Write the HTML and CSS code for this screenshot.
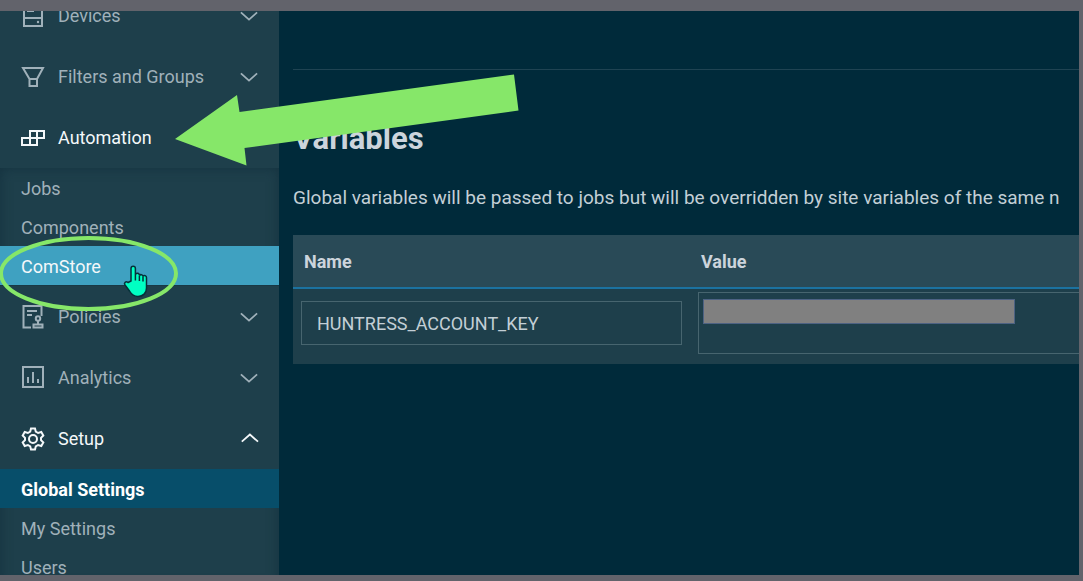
FILE: index.html
```html
<!DOCTYPE html>
<html lang="en">
<head>
    <meta charset="UTF-8">
    <meta name="viewport" content="width=device-width, initial-scale=1.0">
    <title>Global Settings</title>
    <link rel="stylesheet" href="styles.css">
</head>
<body>
    <div class="app">
        <nav class="sidebar">
            <div class="menu">
                <button class="menu-item" type="button">
                    <svg class="icon" viewBox="0 0 24 24"><path d="M3 2h18v20H3zM3 14h18M6 7h7"/><circle class="dot" cx="17" cy="18" r="1.200"/></svg>
                    <span>Devices</span>
                    <svg class="chevron" viewBox="0 0 20 12"><path d="M1 2l9 8 9-8"/></svg>
                </button>
                <button class="menu-item" type="button">
                    <svg class="icon" viewBox="0 0 24 24"><path d="M2 3h20l-6 11v7H8.500v-7zM8.500 14h7.500"/></svg>
                    <span>Filters and Groups</span>
                    <svg class="chevron" viewBox="0 0 20 12"><path d="M1 2l9 8 9-8"/></svg>
                </button>
                <button class="menu-item open" type="button">
                    <svg class="icon" viewBox="0 0 24 24"><path d="M9 5h14v7H9zM1 12h15v7H1zM9 12v7M16 5v7"/></svg>
                    <span>Automation</span>
                </button>
                <div class="submenu">
                    <a href="#">Jobs</a>
                    <a href="#">Components</a>
                    <a href="#" class="hovered">ComStore</a>
                </div>
                <button class="menu-item" type="button">
                    <svg class="icon" viewBox="0 0 24 24"><path d="M10 22.500H2.500V1h18v10M6 6h10M6 10h5"/><circle cx="17" cy="13.500" r="2.200"/><path d="M17 16v3M12.500 19.500h9v3h-9z"/></svg>
                    <span>Policies</span>
                    <svg class="chevron" viewBox="0 0 20 12"><path d="M1 2l9 8 9-8"/></svg>
                </button>
                <button class="menu-item" type="button">
                    <svg class="icon" viewBox="0 0 24 24"><path d="M2 1h20v20H2zM7 11v6M12 6v11M17 13v4"/></svg>
                    <span>Analytics</span>
                    <svg class="chevron" viewBox="0 0 20 12"><path d="M1 2l9 8 9-8"/></svg>
                </button>
                <button class="menu-item open" type="button">
                    <svg class="icon" viewBox="0 0 24 24"><path d="M10 1.500h4l.8 3.200 2.300 1.300 3.200-1 2 3.500-2.300 2.300v2.400l2.300 2.300-2 3.500-3.200-1-2.300 1.300-.8 3.200h-4l-.8-3.200L6.900 18l-3.200 1-2-3.500L4 13.200v-2.400L1.700 8.500l2-3.500 3.200 1 2.300-1.300z"/><circle cx="12" cy="12" r="4"/></svg>
                    <span>Setup</span>
                    <svg class="chevron" viewBox="0 0 20 12"><path d="M2 9l9-8 9 8"/></svg>
                </button>
                <div class="submenu">
                    <a href="#" class="current">Global Settings</a>
                    <a href="#">My Settings</a>
                    <a href="#">Users</a>
                </div>
            </div>
        </nav>
        <main class="content">
            <hr class="divider">
            <h2>Variables</h2>
            <p class="intro">Global variables will be passed to jobs but will be overridden by site variables of the same n</p>
            <table class="variables">
                <thead>
                    <tr>
                        <th class="name-col">Name</th>
                        <th>Value</th>
                    </tr>
                </thead>
                <tbody>
                    <tr>
                        <td><input type="text" value="HUNTRESS_ACCOUNT_KEY" aria-label="Name"></td>
                        <td class="value-cell">
                            <textarea aria-label="Value"></textarea>
                            <span class="redacted"></span>
                        </td>
                    </tr>
                </tbody>
            </table>
        </main>
    </div>
    <svg class="annotations" width="520" height="320" viewBox="0 0 520 320">
        <polygon fill="#86e769" points="175,139 237,95 239.500,112 514,74.500 518.500,110.500 244.500,148 246.500,165.500"/>
        <ellipse cx="88.500" cy="273.500" rx="87.500" ry="35.500" fill="none" stroke="#86e769" stroke-width="4"/>
        <path class="cursor" d="M131 281v-12.500a2.200 2.200 0 0 1 4.400 0v6.500a2 2 0 0 1 4 .5 2 2 0 0 1 3.600.7 2 2 0 0 1 3.500 1.300v10.500c0 5-3.500 8.500-8.500 8.500-4 0-6.500-2-8.500-5.500l-4.500-6c-1.500-2 .8-4.200 3-2.500zM135.400 275v5.500M139.400 276v5M143 277v4.500"/>
    </svg>
</body>
</html>
```
FILE: styles.css
```css
* {
    box-sizing: border-box;
}
body {
    margin: 0;
    height: 100vh;
    padding: 11px 4px 6px 0;
    background: #62636b;
    font-family: Roboto, sans-serif;
    font-size: 18px;
    color: #c3cfd6;
    overflow: hidden;
    position: relative;
}
.app {
    display: flex;
    height: 100%;
    background: #002a3a;
    overflow: hidden;
}
.sidebar {
    flex: 0 0 279px;
    background: #1e3f4b;
    overflow: hidden;
}
/* menu is scrolled down a little */
.menu {
    margin-top: -26px;
}
.menu-item {
    display: flex;
    align-items: center;
    gap: 13px;
    width: 100%;
    height: 61px;
    padding: 0 21px;
    border: 0;
    background: none;
    color: #a0b1ba;
    font: inherit;
    text-align: left;
}
.menu-item.open {
    color: #f4f8fa;
}
.icon {
    width: 24px;
    height: 24px;
    fill: none;
    stroke: currentColor;
    stroke-width: 2;
}
.icon .dot {
    fill: currentColor;
    stroke: none;
}
.chevron {
    width: 18px;
    height: 12px;
    margin-left: auto;
    fill: none;
    stroke: currentColor;
    stroke-width: 2;
    overflow: visible;
}
.submenu {
    padding-bottom: 1px;
    box-shadow: inset 0 0 12px #14323f;
}
.submenu a {
    display: block;
    height: 39px;
    padding: 0 21px;
    line-height: 41px;
    color: #a0b1ba;
    text-decoration: none;
}
.submenu .hovered {
    background: #3fa1c1;
    color: #f4f8fa;
}
.submenu .current {
    background: #074e6a;
    color: #fff;
    font-weight: bold;
}
.content {
    flex: 1;
    min-width: 0;
    padding: 58px 0 0 14px;
    overflow: hidden;
}
.divider {
    margin: 0;
    border: 0;
    border-top: 1px solid #1f4352;
}
h2 {
    margin: 48px 0 0;
    font-size: 31px;
    line-height: 42px;
    color: #ccd4dc;
}
.intro {
    margin: 24px 0 23px;
    font-size: 19px;
    line-height: 28px;
    white-space: nowrap;
}
.variables {
    width: 100%;
    min-width: 1040px;
    table-layout: fixed;
    border-collapse: separate;
    border-spacing: 0;
    background: #1e3f4b;
}
.variables th {
    height: 54px;
    padding: 0 11px;
    background: #294a57;
    border-bottom: 2px solid #1b72a0;
    text-align: left;
    color: #ccd4dc;
}
.variables .name-col {
    width: 397px;
}
.variables td {
    height: 75px;
    padding: 3px 8px 10px;
    vertical-align: middle;
}
.variables input,
.variables textarea {
    display: block;
    width: 100%;
    height: 44px;
    padding: 0 15px;
    border: 1px solid #47656f;
    background: none;
    color: #c3cfd6;
    font: inherit;
    resize: none;
}
.variables textarea {
    height: 62px;
}
.value-cell {
    position: relative;
}
.redacted {
    position: absolute;
    top: 10px;
    left: 13px;
    width: 312px;
    height: 25px;
    background: #808080;
    border: 1px solid #4d6283;
}
.annotations {
    position: absolute;
    top: 0;
    left: 0;
    pointer-events: none;
}
.cursor {
    fill: #00ffc3;
    stroke: #06303a;
    stroke-width: 1.5;
}
```
